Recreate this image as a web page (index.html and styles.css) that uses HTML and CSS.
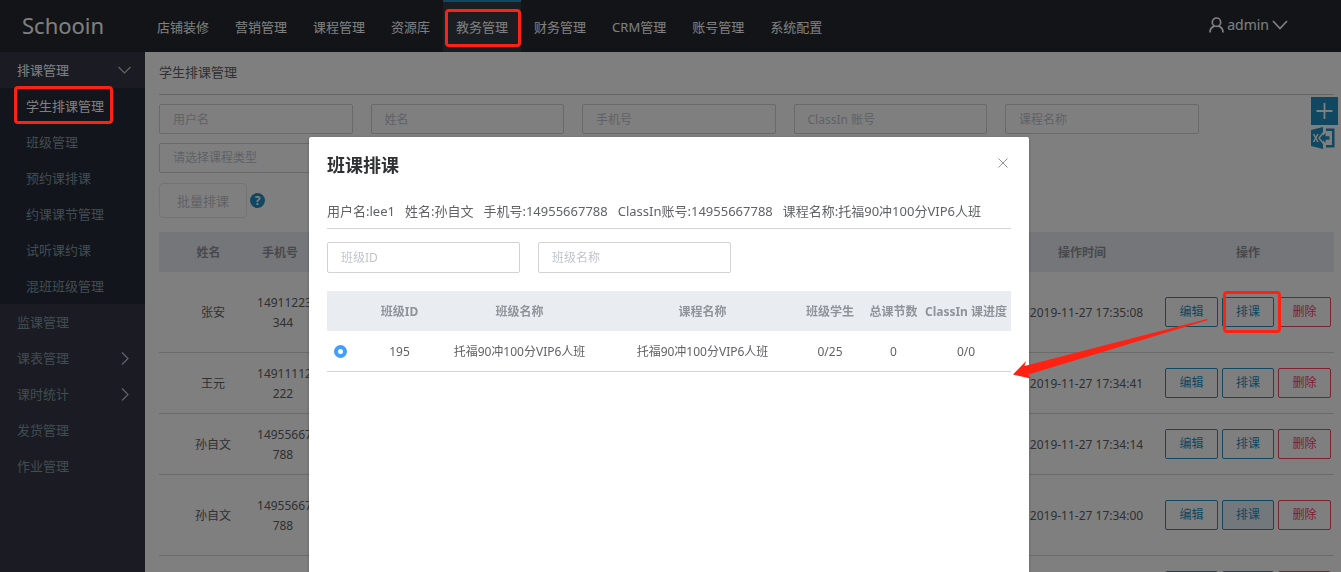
FILE: index.html
```html
<!DOCTYPE html>
<html lang="zh-CN">
<head>
<meta charset="utf-8">
<title>学生排课管理 - Schooin</title>
<link rel="stylesheet" href="styles.css">
</head>
<body>
<header class="topbar">
  <div class="brand">Schooin</div>
  <nav class="topnav">
    <a href="#">店铺装修</a>
    <a href="#">营销管理</a>
    <a href="#">课程管理</a>
    <a href="#">资源库</a>
    <a href="#" class="active">教务管理<span class="mark mark-nav"></span></a>
    <a href="#">财务管理</a>
    <a href="#">CRM管理</a>
    <a href="#">账号管理</a>
    <a href="#">系统配置</a>
  </nav>
  <button type="button" class="account">
    <svg width="15" height="16" viewBox="0 0 15 16" fill="none" stroke="currentColor" stroke-width="1.7"><circle cx="7.5" cy="5.2" r="4.2"/><path d="M1 15.5C1 12 3 9.8 5.6 9.1M14 15.500C14 12 12 9.800 9.400 9.100"/></svg>
    <span>admin</span>
    <svg width="16" height="10" viewBox="0 0 16 10" fill="none" stroke="currentColor" stroke-width="1.7"><path d="M1 1l7 7.500L15 1"/></svg>
  </button>
</header>
<div class="shell">
  <aside class="sidebar">
    <a href="#" class="group bright">排课管理
      <svg width="13" height="8" viewBox="0 0 13 8" fill="none" stroke="currentColor" stroke-width="1.2"><path d="M.5 1l6 6 6-6"/></svg>
    </a>
    <div class="submenu">
      <a href="#" class="bright">学生排课管理<span class="mark mark-side"></span></a>
      <a href="#">班级管理</a>
      <a href="#">预约课排课</a>
      <a href="#">约课课节管理</a>
      <a href="#">试听课约课</a>
      <a href="#">混班班级管理</a>
    </div>
    <a href="#" class="group">监课管理</a>
    <a href="#" class="group">课表管理
      <svg class="right" width="8" height="13" viewBox="0 0 8 13" fill="none" stroke="currentColor" stroke-width="1.2"><path d="M1 .5l6 6-6 6"/></svg>
    </a>
    <a href="#" class="group">课时统计
      <svg class="right" width="8" height="13" viewBox="0 0 8 13" fill="none" stroke="currentColor" stroke-width="1.2"><path d="M1 .5l6 6-6 6"/></svg>
    </a>
    <a href="#" class="group">发货管理</a>
    <a href="#" class="group">作业管理</a>
  </aside>
  <main class="content">
    <h1 class="page-title">学生排课管理</h1>
    <form class="filters">
      <input class="field" type="text" placeholder="用户名" aria-label="用户名">
      <input class="field" type="text" placeholder="姓名" aria-label="姓名">
      <input class="field" type="text" placeholder="手机号" aria-label="手机号">
      <input class="field" type="text" placeholder="ClassIn 账号" aria-label="ClassIn 账号">
      <input class="field" type="text" placeholder="课程名称" aria-label="课程名称">
      <select class="field" aria-label="课程类型"><option>请选择课程类型</option></select>
    </form>
    <div class="batch">
      <button type="button" class="batch-btn" disabled>批量排课</button>
      <span class="help">?</span>
    </div>
    <table class="grid students">
      <colgroup><col class="s-pick"><col class="s-name"><col class="s-phone"><col><col class="s-time"><col class="s-ops"></colgroup>
      <thead>
        <tr><th></th><th>姓名</th><th>手机号</th><th></th><th>操作时间</th><th class="ops-head">操作</th></tr>
      </thead>
      <tbody>
        <tr class="tall"><td></td><td>张安</td><td class="phone">14911223344&nbsp;</td><td></td><td>2019-11-27 17:35:08</td>
          <td class="ops-cell"><div class="ops"><button type="button" class="btn">编辑</button><button type="button" class="btn plan">排课<span class="mark mark-plan"></span></button><button type="button" class="btn danger">删除</button></div></td></tr>
        <tr><td></td><td>王元</td><td class="phone">14911112222&nbsp;</td><td></td><td>2019-11-27 17:34:41</td>
          <td class="ops-cell"><div class="ops"><button type="button" class="btn">编辑</button><button type="button" class="btn plan">排课</button><button type="button" class="btn danger">删除</button></div></td></tr>
        <tr><td></td><td>孙自文</td><td class="phone">14955667788&nbsp;</td><td></td><td>2019-11-27 17:34:14</td>
          <td class="ops-cell"><div class="ops"><button type="button" class="btn">编辑</button><button type="button" class="btn plan">排课</button><button type="button" class="btn danger">删除</button></div></td></tr>
        <tr class="tall"><td></td><td>孙自文</td><td class="phone">14955667788&nbsp;</td><td></td><td>2019-11-27 17:34:00</td>
          <td class="ops-cell"><div class="ops"><button type="button" class="btn">编辑</button><button type="button" class="btn plan focused">排课</button><button type="button" class="btn danger">删除</button></div></td></tr>
        <tr><td></td><td></td><td></td><td></td><td></td>
          <td class="ops-cell"><div class="ops"><button type="button" class="btn" aria-label="编辑"></button><button type="button" class="btn plan" aria-label="排课"></button><button type="button" class="btn danger" aria-label="删除"></button></div></td></tr>
      </tbody>
    </table>
  </main>
</div>
<div class="tools">
  <button type="button" class="tool" aria-label="添加">
    <svg width="27" height="28" viewBox="0 0 27 28"><path fill="#2090c4" d="M0 0h27v28H0z"/><path d="M13.500 6v16M5.500 14h16" stroke="#fff" stroke-width="1.800"/></svg>
  </button>
  <button type="button" class="tool" aria-label="导出 Excel">
    <svg width="24" height="22" viewBox="0 0 24 22"><path fill="#2090c4" d="M0 3L12 0v22L0 19zM15 1.500h8.500v19H15v-2.500h6V4h-6z"/><path d="M2.500 7l4.500 8M7 7l-4.500 8M12.500 5.500L8 11l4.500 5.500" fill="none" stroke="#fff" stroke-width="1.500"/><path fill="#2090c4" d="M9.500 11l5-5v3.300h4v3.400h-4V16z"/></svg>
  </button>
</div>
<div class="overlay">
  <section class="dialog" role="dialog" aria-labelledby="dialog-title">
    <div class="dialog-head">
      <h2 id="dialog-title">班课排课</h2>
      <button type="button" class="close" aria-label="关闭">
        <svg width="10" height="10" viewBox="0 0 10 10" stroke="currentColor" stroke-width="1"><path d="M.5.5l9 9M9.500.5l-9 9"/></svg>
      </button>
    </div>
    <div class="info">
      <span>用户名:lee1</span><span>姓名:孙自文</span><span>手机号:14955667788</span><span>ClassIn账号:14955667788</span><span>课程名称:托福90冲100分VIP6人班</span>
    </div>
    <form class="dialog-filters">
      <input class="field" type="text" placeholder="班级ID" aria-label="班级ID">
      <input class="field" type="text" placeholder="班级名称" aria-label="班级名称">
    </form>
    <table class="grid classes">
      <colgroup><col class="c-pick"><col class="c-id"><col class="c-name"><col class="c-name"><col class="c-num"><col class="c-total"><col class="c-progress"></colgroup>
      <thead>
        <tr><th></th><th>班级ID</th><th>班级名称</th><th>课程名称</th><th>班级学生</th><th>总课节数</th><th>ClassIn 课进度</th></tr>
      </thead>
      <tbody>
        <tr><td class="pick"><input type="radio" class="radio" name="class" aria-label="班级 195" checked></td><td>195</td><td>托福90冲100分VIP6人班</td><td>托福90冲100分VIP6人班</td><td>0/25</td><td>0</td><td>0/0</td></tr>
      </tbody>
    </table>
    <svg class="arrow" width="196" height="60" viewBox="0 0 196 60"><path fill="#ff2213" d="M0 55.500L13 42l-1.500 5L194 0l1 1L15.500 55.500l2 4z"/></svg>
  </section>
</div>
</body>
</html>
```
FILE: styles.css
```css
* { box-sizing: border-box; }

body {
  margin: 0;
  height: 100vh;
  display: flex;
  flex-direction: column;
  overflow: hidden;
  background: #fff;
  color: #606266;
  font: 13px/20px "Noto Sans", "Noto Sans CJK SC", sans-serif;
}

a { color: inherit; text-decoration: none; }
h1, h2 { margin: 0; }
button { font: inherit; cursor: pointer; }
svg { display: block; }

.topbar {
  display: flex;
  flex: none;
  height: 52px;
  background: #24282e;
  color: #fff;
}
.brand {
  width: 144px;
  padding-left: 22px;
  font-size: 22px;
  line-height: 50px;
}
.topnav { display: flex; }
.topnav a {
  position: relative;
  padding: 0 13px;
  border-top: 2px solid transparent;
  line-height: 50px;
}
.topnav .active { background: #343a42; border-top-color: #2090c4; }
.account {
  display: flex;
  align-items: center;
  gap: 3px;
  height: 50px;
  margin-left: auto;
  margin-right: 53px;
  padding: 0;
  border: 0;
  background: none;
  color: #fff;
  font-size: 14px;
}

.shell { display: flex; flex: 1; min-height: 0; }
.sidebar {
  flex: none;
  width: 145px;
  background: #363746;
  color: #8399a2;
}
.sidebar a {
  display: flex;
  align-items: center;
  justify-content: space-between;
  height: 36px;
  padding: 0 14px 0 17px;
}
.sidebar .right { margin-right: 2px; }
.sidebar svg { color: #c8c8c8; }
.submenu { background: #242a36; }
.sidebar .submenu a { position: relative; padding-left: 26px; }
.sidebar .bright { color: #fff; }

.content { flex: 1; min-width: 0; padding: 10px 7px 0 14px; overflow: hidden; }
.page-title {
  padding-bottom: 12px;
  border-bottom: 1px solid #ccc;
  color: #606266;
  font-size: 13px;
  font-weight: 400;
}
.filters {
  display: grid;
  grid-template-columns: repeat(5, 18%);
  row-gap: 9px;
  margin-top: 9px;
}
.field {
  width: calc(100% - 18px);
  height: 30px;
  padding: 0 13px;
  border: 1px solid #d2d2d2;
  border-radius: 2px;
  background: #fff;
  color: #606266;
  font: inherit;
  font-size: 12px;
}
.field::placeholder { color: #c0c4cc; opacity: 1; }
select.field { appearance: none; color: #c0c4cc; }

.batch { display: flex; align-items: center; gap: 3px; margin: 10px 0 14px; }
.batch-btn {
  height: 35px;
  padding: 0 17px;
  border: 1px solid #e8e8e8;
  border-radius: 4px;
  background: #fff;
  color: #c0c4cc;
}
.help {
  width: 15px;
  height: 15px;
  border-radius: 50%;
  background: #2090c4;
  color: #fff;
  font-size: 12px;
  font-weight: 700;
  line-height: 15px;
  text-align: center;
}

.grid {
  width: 100%;
  border-collapse: separate;
  border-spacing: 0;
  table-layout: fixed;
  font-size: 12px;
  text-align: center;
}
.grid th {
  height: 40px;
  padding: 2px 0 0;
  background: #e9edf2;
  color: #909399;
}
.grid td { padding: 2px 0 0; border-bottom: 1px solid #d4d4d4; }

.students th { padding-right: 9px; }
.students .ops-head { padding-right: 0; }
.students td { height: 61px; }
.students .tall td { height: 81px; }
.students .phone { padding: 2px 4px 0; word-break: break-all; }
.students .ops-cell { padding: 0; }
.s-pick { width: 14px; }
.s-name { width: 80px; }
.s-phone { width: 63px; }
.s-time { width: 151px; }
.s-ops { width: 172px; }

.ops { display: flex; justify-content: center; gap: 4px; }
.btn {
  position: relative;
  width: 53px;
  height: 30px;
  padding: 0;
  border: 1px solid #2090c4;
  border-radius: 2px;
  background: #fff;
  color: #2090c4;
  line-height: 28px;
}
.plan { width: 52px; }
.focused { background: #e6f1fb; }
.danger { border-color: #f8425e; color: #f8425e; }

.tools {
  position: fixed;
  top: 97px;
  right: 3px;
  display: flex;
  flex-direction: column;
  gap: 2px;
}
.tool { padding: 0; border: 0; background: none; }

.overlay {
  position: fixed;
  inset: 0;
  z-index: 10;
  display: flex;
  justify-content: center;
  padding: 137px 3px 0 0;
  background: rgba(0, 0, 0, .5);
}
.dialog {
  position: relative;
  width: 720px;
  padding: 16px 18px 0;
  border-radius: 2px 2px 0 0;
  background: #fff;
  box-shadow: 0 1px 3px rgba(0, 0, 0, .3);
}
.dialog-head { display: flex; justify-content: space-between; }
.dialog-head h2 { color: #303133; font-size: 18px; line-height: 24px; }
.close {
  height: 20px;
  padding: 0 3px;
  border: 0;
  background: none;
  color: #909399;
}
.info {
  display: flex;
  gap: 10px;
  margin-top: 24px;
  padding-bottom: 7px;
  border-bottom: 1px solid #d4d4d4;
  white-space: nowrap;
}
.dialog-filters { display: flex; gap: 18px; margin: 13px 0 18px; }
.dialog-filters .field { width: 193px; height: 31px; }

.classes td { height: 41px; }
.classes .pick { padding: 0 0 0 7px; text-align: left; }
.c-pick { width: 44px; }
.c-id { width: 57px; }
.c-name { width: 183px; }
.c-num { width: 72px; }
.c-total { width: 55px; }
.radio {
  display: block;
  width: 13px;
  height: 13px;
  margin: 0;
  appearance: none;
  border: 1px solid #d4d4d4;
  border-radius: 50%;
  background: #fff;
}
.radio:checked { border: 4px solid #409eff; }

/* Red guide marks drawn over the page */
.mark {
  position: absolute;
  z-index: 20;
  border: 3px solid #ff2213;
  border-radius: 4px;
  pointer-events: none;
}
.mark-nav { inset: 7px 0 5px 2px; }
.mark-side { inset: -2px 32px 0 14px; }
.mark-plan { inset: -7px -8px -7px 0; }
.arrow {
  position: absolute;
  top: 182px;
  left: calc(100% - 16px);
}
```
